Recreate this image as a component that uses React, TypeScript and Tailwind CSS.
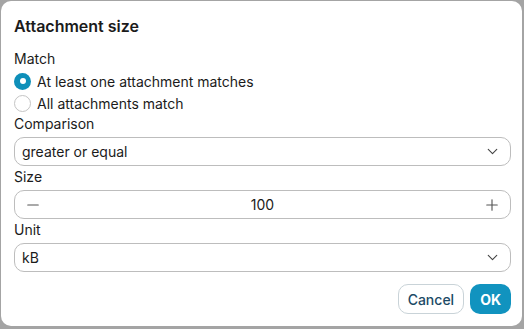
import { ChevronDown, Minus, Plus } from "lucide-react";

function Select({ value }: { value: string }) {
  return (
    <div className="flex h-[29px] items-center justify-between rounded-[10px] border border-[#bdbdbd] bg-white pl-[7px] pr-[9px]">
      <span>{value}</span>
      <ChevronDown className="size-[17px] text-[#444]" strokeWidth={1.6} />
    </div>
  );
}

function Radio({ checked, label }: { checked?: boolean; label: string }) {
  return (
    <label className="flex h-[22px] items-center gap-[6px]">
      {checked ? (
        <span className="flex size-[17px] items-center justify-center rounded-full bg-[#0e8fb9]">
          <span className="size-[6px] rounded-full bg-white" />
        </span>
      ) : (
        <span className="size-[17px] rounded-full border border-[#c4c4c4] bg-white" />
      )}
      <span>{label}</span>
    </label>
  );
}

export default function App() {
  return (
    <div className="h-[329px] w-[524px] bg-[#a4a4a4] pl-px pt-px" style={{ fontFamily: "Inter, 'Noto Sans', sans-serif" }}>
      <div className="flex h-[325px] w-[521px] flex-col rounded-[10px] bg-white pl-[13px] pr-[11px] text-[14px] text-[#1b1b1b]">
        <h2 className="mt-[14px] text-[16px] font-semibold leading-[22px]">Attachment size</h2>

        <div className="mt-[12px] leading-[20px]">Match</div>
        <div className="mt-[1px]">
          <Radio checked label="At least one attachment matches" />
          <Radio label="All attachments match" />
        </div>

        <div className="leading-[20px]">Comparison</div>
        <div className="mt-[3px]">
          <Select value="greater or equal" />
        </div>

        <div className="mt-[1px] leading-[20px]">Size</div>
        <div className="mt-[3px] flex h-[29px] items-center rounded-[10px] border border-[#bdbdbd] bg-white px-[9px]">
          <Minus className="size-[18px] text-[#555]" strokeWidth={1.5} />
          <span className="flex-1 text-center">100</span>
          <Plus className="size-[18px] text-[#555]" strokeWidth={1.5} />
        </div>

        <div className="mt-[1px] leading-[20px]">Unit</div>
        <div className="mt-[3px]">
          <Select value="kB" />
        </div>

        <div className="mt-[12px] flex justify-end gap-[6px]">
          <button className="h-[30px] rounded-[10px] border border-[#c9d3d8] bg-white px-[9px] font-medium text-[#1b4a66]">
            Cancel
          </button>
          <button className="h-[30px] rounded-[10px] bg-[#1193bf] px-[10px] font-bold text-white">
            OK
          </button>
        </div>
      </div>
    </div>
  );
}
